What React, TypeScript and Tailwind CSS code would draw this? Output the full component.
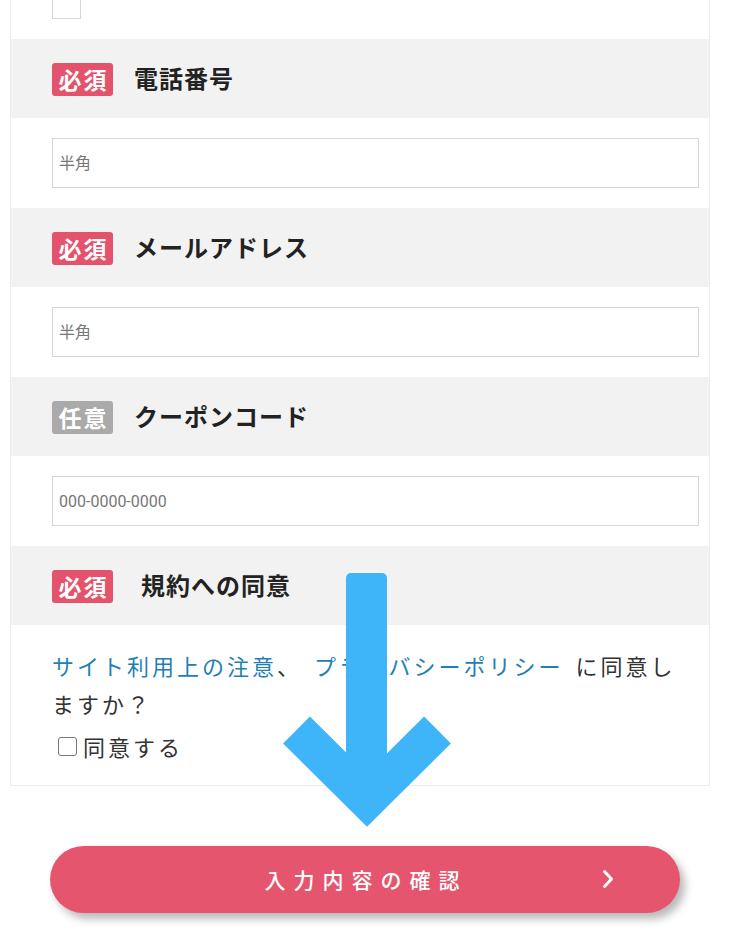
import React from 'react';

const jp = "font-['Noto_Sans_CJK_JP',sans-serif]";

interface Field {
    label: string;
    required: boolean;
    placeholder: string;
}

const FIELDS: Field[] = [
    { label: '電話番号', required: true, placeholder: '半角' },
    { label: 'メールアドレス', required: true, placeholder: '半角' },
    { label: 'クーポンコード', required: false, placeholder: '000-0000-0000' },
];

const Badge: React.FC<{ required: boolean }> = ({ required }) => (
    <span
        className={`flex h-[33px] w-[61px] items-center justify-center rounded-[3px] pl-[2px] text-[23px] font-bold leading-none tracking-[2px] text-white ${
            required ? 'bg-[#e4536c]' : 'bg-[#aaaaaa]'
        }`}
    >
        {required ? '必須' : '任意'}
    </span>
);

const Header: React.FC<{ label: string; required: boolean; indent?: boolean }> = ({ label, required, indent }) => (
    <div className="flex h-[79px] items-center bg-[#f2f2f2] pl-[41px] pt-[2px]">
        <Badge required={required} />
        <h3 className={`${indent ? 'ml-[28px]' : 'ml-[21px]'} -mt-[3px] text-[24px] font-bold tracking-[1px] text-[#222]`}>
            {label}
        </h3>
    </div>
);

const App: React.FC = () => {
    return (
        <div className={`relative h-[933px] w-[733px] overflow-hidden bg-white ${jp}`}>
            <div className="ml-[10px] w-[700px] border-x border-b border-[#ececec]">
                {/* tail of the previous field */}
                <div className="h-[39px] pl-[41px]">
                    <div className="h-[19px] w-[29px] border-x border-b border-[#d6d6d6]" />
                </div>

                {FIELDS.map((f) => (
                    <div key={f.label}>
                        <Header label={f.label} required={f.required} />
                        <div className="pb-[20px] pl-[41px] pr-[10px] pt-[20px]">
                            <input
                                type="text"
                                placeholder={f.placeholder}
                                className="block h-[50px] w-full border border-[#d6d6d6] bg-white px-[6px] font-['Roboto','Noto_Sans_CJK_JP',sans-serif] text-[16px] text-[#333] outline-none placeholder:text-[#777]"
                            />
                        </div>
                    </div>
                ))}

                <Header label="規約への同意" required indent />
                <div className="pb-[20px] pl-[41px] pr-[10px] pt-[21px] text-[22px] leading-[38px] tracking-[3px] text-[#333]">
                    <p className="whitespace-nowrap">
                        <a className="text-[#1f80b5]">サイト利用上の注意</a>、
                        <a className="ml-[12px] text-[#1f80b5]">プライバシーポリシー</a>
                        <span className="ml-[12px]">に同意し</span>
                        <br />
                        ますか？
                    </p>
                    <label className="mt-[5px] flex items-center">
                        <input
                            type="checkbox"
                            className="ml-[6px] mr-[6px] h-[19px] w-[19px] appearance-none rounded-[3px] border border-[#767676] bg-white"
                        />
                        同意する
                    </label>
                </div>
            </div>

            <div className="px-[50px] pt-[60px]">
                <button className="relative flex h-[67px] w-[630px] items-center justify-center rounded-full bg-[#e5566e] pl-[2px] text-[21px] font-medium tracking-[8px] text-white shadow-[5px_6px_8px_rgba(0,0,0,0.28)]">
                    入力内容の確認
                    <svg
                        className="absolute left-[552px] top-[23px]"
                        width="12"
                        height="20"
                        viewBox="0 0 12 20"
                        fill="none"
                        stroke="white"
                        strokeWidth="3"
                        strokeLinecap="round"
                        strokeLinejoin="round"
                    >
                        <path d="M2.5 2.5 L9.5 10 L2.5 17.5" />
                    </svg>
                </button>
            </div>

            {/* blue guide arrow over the form */}
            <svg
                className="pointer-events-none absolute left-0 top-0"
                width="733"
                height="933"
                viewBox="0 0 733 933"
            >
                <rect x="346" y="573" width="41" height="230" rx="5" fill="#3db5f8" />
                <path
                    d="M296.5 730 L367 800 L437.5 730"
                    fill="none"
                    stroke="#3db5f8"
                    strokeWidth="38"
                    strokeLinejoin="miter"
                />
            </svg>
        </div>
    );
};

export default App;
